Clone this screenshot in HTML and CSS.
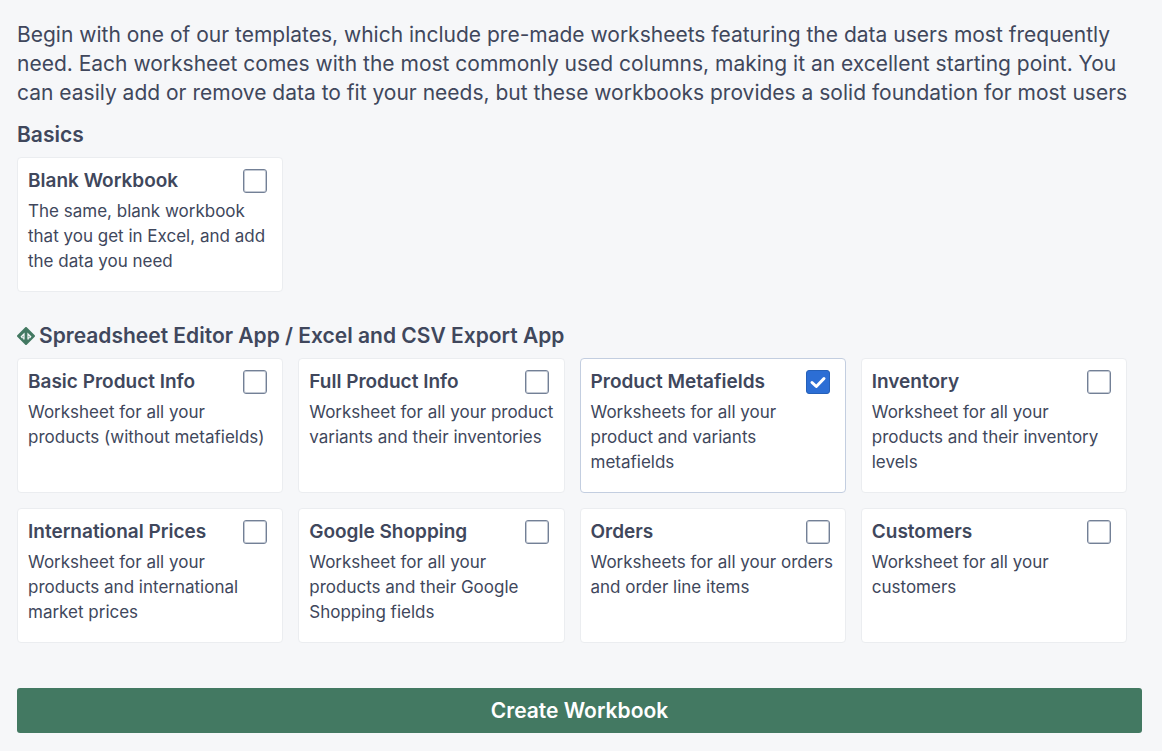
FILE: index.html
```html
<!DOCTYPE html>
<html lang="en">
<head>
<meta charset="utf-8">
<title>Create Workbook</title>
<link rel="stylesheet" href="styles.css">
</head>
<body>
<form class="page">
  <p class="intro">Begin with one of our templates, which include pre-made worksheets featuring the data users most frequently need. Each worksheet comes with the most commonly used columns, making it an excellent starting point. You can easily add or remove data to fit your needs, but these workbooks provides a solid foundation for most users</p>
  <section class="group">
    <h2 class="heading">Basics</h2>
    <div class="grid">
      <label class="card"><span class="top"><span class="name">Blank Workbook</span><input class="check" type="checkbox"></span><span class="desc">The same, blank workbook that you get in Excel, and add the data you need</span></label>
    </div>
  </section>
  <section class="group">
    <h2 class="heading"><svg class="logo" viewBox="0 0 18 18" aria-hidden="true"><path fill="#437962" stroke="#437962" stroke-width="2" stroke-linejoin="round" d="M9 1 17 9 9 17 1 9z"/><path fill="#f6f7f9" d="M7.600 5.500v7H6.200v-1.300H4.800L3.500 9.500zM10.400 5.500v7h1.400v-1.300h1.400L14.500 9.500z"/><path fill="#437962" d="M6.400 8.600v1.600H5zM11.600 8.600v1.600H13z"/></svg>Spreadsheet Editor App / Excel and CSV Export App</h2>
    <div class="grid">
      <label class="card"><span class="top"><span class="name">Basic Product Info</span><input class="check" type="checkbox"></span><span class="desc">Worksheet for all your products (without metafields)</span></label>
      <label class="card"><span class="top"><span class="name">Full Product Info</span><input class="check" type="checkbox"></span><span class="desc">Worksheet for all your product variants and their inventories</span></label>
      <label class="card"><span class="top"><span class="name">Product Metafields</span><span class="checked"><input class="check" type="checkbox" checked><svg class="tick" viewBox="0 0 24 24" aria-hidden="true"><path d="M6 12.500 10.300 16.500 18 8.500"/></svg></span></span><span class="desc">Worksheets for all your product and variants metafields</span></label>
      <label class="card"><span class="top"><span class="name">Inventory</span><input class="check" type="checkbox"></span><span class="desc">Worksheet for all your products and their inventory levels</span></label>
      <label class="card"><span class="top"><span class="name">International Prices</span><input class="check" type="checkbox"></span><span class="desc">Worksheet for all your products and international market prices</span></label>
      <label class="card"><span class="top"><span class="name">Google Shopping</span><input class="check" type="checkbox"></span><span class="desc">Worksheet for all your products and their Google Shopping fields</span></label>
      <label class="card"><span class="top"><span class="name">Orders</span><input class="check" type="checkbox"></span><span class="desc">Worksheets for all your orders and order line items</span></label>
      <label class="card"><span class="top"><span class="name">Customers</span><input class="check" type="checkbox"></span><span class="desc">Worksheet for all your customers</span></label>
    </div>
  </section>
  <button class="create" type="button">Create Workbook</button>
</form>
</body>
</html>
```
FILE: styles.css
```css
* { box-sizing: border-box; }
body { margin: 0; background: #f6f7f9; color: #40475c; font-family: Inter, "Liberation Sans", sans-serif; }
.page { padding: 20px 20px 18px 17px; }
.intro { margin: 0 0 13px; font-size: 21px; line-height: 29px; }
.group { margin: 0 15px 29px 0; }
.heading { display: flex; align-items: center; gap: 4px; margin: 0 0 8px; font-size: 21px; line-height: 29px; font-weight: 600; }
.logo { width: 18px; height: 18px; }
.grid { display: grid; grid-template-columns: repeat(4, minmax(0, 1fr)); gap: 15px; }
.card { display: block; min-height: 135px; padding: 10px; border: 1px solid #ebedf0; border-radius: 4px; background: #fff; }
.card:has(.check:checked) { border-color: #c3cee0; }
.top { display: flex; justify-content: space-between; padding-right: 5px; }
.name { font-size: 19px; line-height: 25px; font-weight: 600; }
.desc { display: block; margin-top: 6px; font-size: 17px; line-height: 25px; }
.check { appearance: none; display: block; width: 24px; height: 24px; margin: 1px 0 0; border: 1px solid #738096; border-radius: 3px; background: #fff; box-shadow: inset 0 0 0 1px #c3c9d3; }
.check:checked { border-color: #2560b8; background: #2c6ed5; box-shadow: none; }
.checked { display: grid; }
.checked > * { grid-area: 1 / 1; }
.tick { width: 24px; height: 24px; margin-top: 1px; pointer-events: none; fill: none; stroke: #fff; stroke-width: 3; stroke-linecap: round; stroke-linejoin: round; }
.check:not(:checked) + .tick { visibility: hidden; }
.create { display: block; width: 100%; height: 45px; margin-top: 45px; border: 0; border-radius: 3px; background: #437962; color: #fff; font: 600 21px Inter, "Liberation Sans", sans-serif; }
```
